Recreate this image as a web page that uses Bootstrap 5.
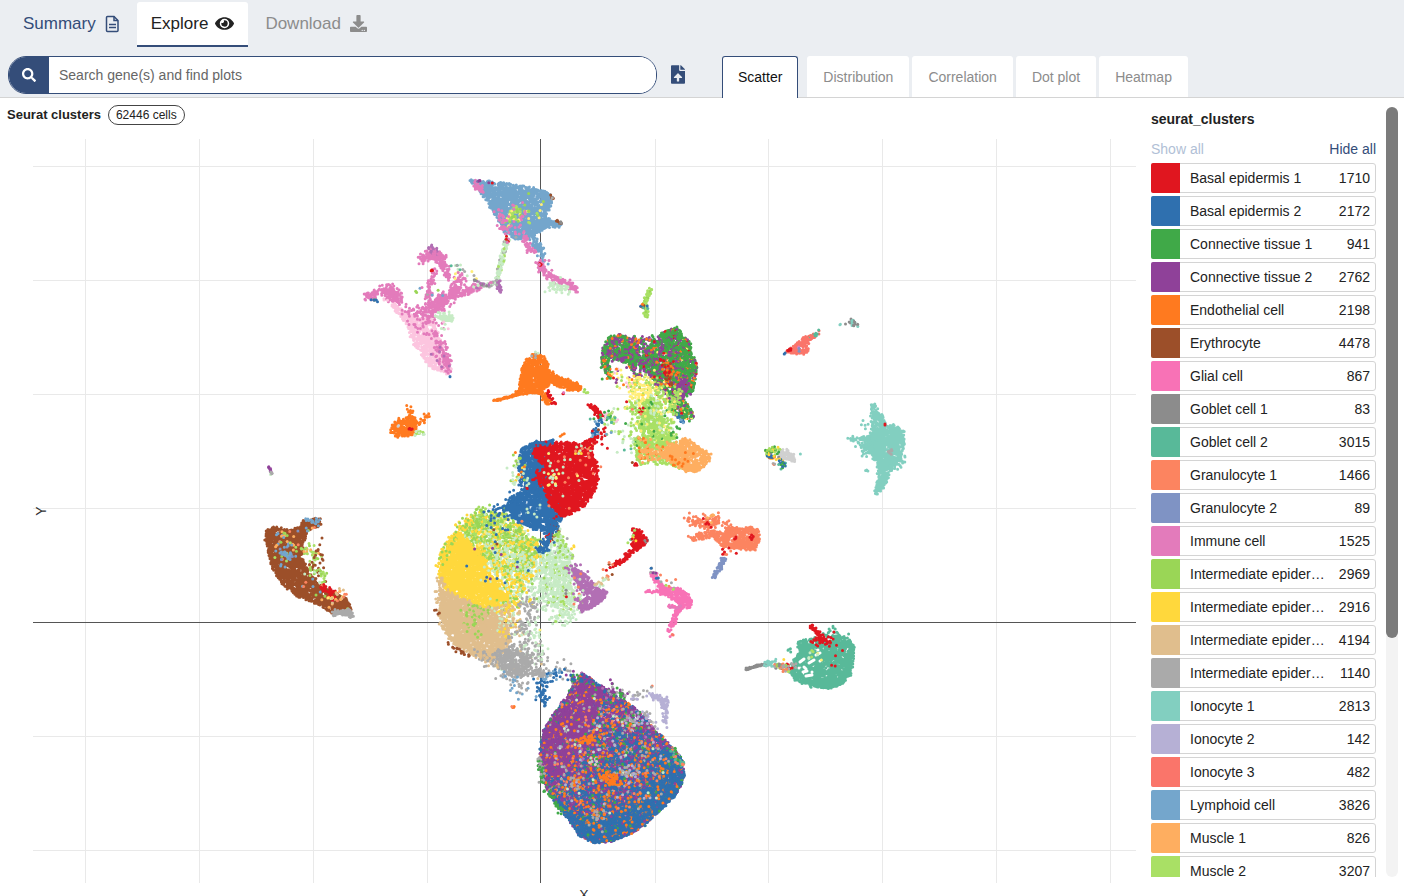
<!DOCTYPE html>
<html lang="en">
<head>
<meta charset="utf-8">
<meta name="viewport" content="width=device-width, initial-scale=1">
<title>Seurat clusters</title>
<link href="https://cdn.jsdelivr.net/npm/bootstrap@5.3.0/dist/css/bootstrap.min.css" rel="stylesheet">
<style>
:root{--navy:#344d79;--edge:#d4d4d4}
body{font-family:"Liberation Sans",Arial,sans-serif;font-size:14px;line-height:20px;color:#222}
.top-area{background:#ebeef2;border-bottom:1px solid var(--edge)}
.page-tabs{padding:2px 0 0 9px;gap:3px;height:56px}
.page-tabs .nav-link{height:45px;font-size:17px;line-height:24px;padding:9px 14px;border-radius:3px 3px 0 0;color:var(--navy);gap:9px;border-bottom:2px solid transparent}
.page-tabs .nav-link.active{background:#fff;color:#222;border-bottom-color:var(--navy);gap:7px}
.page-tabs .nav-link.disabled{color:#8c8c8c}
.search-row{height:41px;padding-left:8px}
.search-box{width:calc(50% - 49px);height:38px;border:1px solid var(--navy);border-radius:18px;overflow:hidden;background:#fff}
.search-box .btn{width:40px;background:var(--navy);border-radius:0;padding:0;border:0}
.search-box .form-control{border:0;font-size:14px;padding:0 10px;border-radius:0}
.search-box .form-control::placeholder{color:#666;opacity:1}
.upload-btn{width:36px;height:36px;margin:0 26px 0 3px}
.plot-tabs{gap:3px}
.plot-tabs .nav-link{height:41px;padding:11px 16px;background:#fff;color:#8c8c8c;border-radius:3px 3px 0 0}
.plot-tabs .nav-link.active{height:42px;padding:10px 15px;color:#111;border:1px solid var(--navy);border-bottom:0;margin-right:6px}
.plot-title{font-size:13px;padding:7px 7px 0;gap:7px}
.cells-pill{font-size:12px;line-height:18px;border:1px solid #444;padding:0 7px;border-radius:10px}
.plot-svg{display:block;width:100%}
.grid-line{stroke:#e9e9e9;stroke-width:1}
.axis-line{stroke:#555;stroke-width:1}
.side-area{width:264px;padding:9px 6px 19px 11px;gap:10px}
.side-title{padding-top:2px}
.legend-links{margin-top:10px}
.legend-links a{color:var(--navy)}
.legend-links a.off{color:#b1bfd6}
.legend-rows{gap:3px;margin-top:4px}
.legend-btn{height:30px;border:1px solid var(--edge);border-radius:3px;background:#fff;padding:0 5px 0 0;color:#222;gap:10px;text-align:left;flex:none}
.swatch-box{width:29px;height:30px;margin:-1px 0 -1px -1px;border-radius:2px 0 0 2px;flex:none}
.scroll-track{width:12px;background:#f3f3f3;border-radius:6px}
.scroll-thumb{height:69%;background:#7b7b7b;border-radius:6px}
</style>
<script src="https://cdn.jsdelivr.net/npm/bootstrap@5.3.0/dist/js/bootstrap.bundle.min.js"></script>
</head>
<body class="vh-100 overflow-hidden d-flex flex-column">
<header class="top-area">
  <nav class="nav page-tabs" aria-label="Sections">
    <a class="nav-link d-flex align-items-center" href="#summary">Summary
      <svg width="15" height="18" viewBox="0 0 15 18" fill="none" stroke="currentColor" stroke-width="1.5"><path d="M2.500 1.500H9L13 5.500V15.500Q13 16.500 12 16.500H2.500Q1.500 16.500 1.500 15.500V2.500Q1.500 1.500 2.500 1.500Z"/><path d="M9 1.500V5.500H13M4 9.500h7M4 12.500h7"/></svg></a>
    <a class="nav-link active d-flex align-items-center" aria-current="page" href="#explore">Explore
      <svg width="19" height="17" viewBox="0 0 576 512" fill="currentColor"><path d="M572.500 241.400C518.300 135.600 410.900 64 288 64S57.700 135.600 3.500 241.400a32.400 32.400 0 0 0 0 29.200C57.700 376.400 165.100 448 288 448s230.300-71.600 284.500-177.400a32.400 32.400 0 0 0 0-29.200zM288 400a144 144 0 1 1 144-144 143.900 143.900 0 0 1-144 144zm0-240a95.300 95.300 0 0 0-25.300 3.800 47.900 47.900 0 0 1-66.900 66.900A95.800 95.800 0 1 0 288 160z"/></svg></a>
    <a class="nav-link disabled d-flex align-items-center" href="#download">Download
      <svg width="17" height="17" viewBox="0 0 512 512" fill="currentColor"><path d="M216 0h80c13.300 0 24 10.700 24 24v168h87.700c17.800 0 26.700 21.500 14.100 34.100L269.700 378.300c-7.500 7.500-19.800 7.500-27.300 0L90.100 226.100c-12.600-12.600-3.700-34.100 14.100-34.100H192V24c0-13.300 10.700-24 24-24zm296 376v112c0 13.300-10.700 24-24 24H24c-13.300 0-24-10.700-24-24V376c0-13.300 10.700-24 24-24h146.700l49 49c20.100 20.100 52.500 20.100 72.600 0l49-49H488c13.300 0 24 10.700 24 24zm-124 88c0-11-9-20-20-20s-20 9-20 20 9 20 20 20 20-9 20-20zm64 0c0-11-9-20-20-20s-20 9-20 20 9 20 20 20 20-9 20-20z"/></svg></a>
  </nav>
  <div class="search-row d-flex">
    <form class="search-box d-flex flex-shrink-0" role="search">
      <button class="btn d-flex align-items-center justify-content-center flex-shrink-0" type="button" aria-label="Search"><svg width="14" height="14" viewBox="0 0 512 512" fill="#fff"><path d="M505 442.700L405.300 343c-4.500-4.500-10.600-7-17-7H372c27.600-35.300 44-79.700 44-128C416 93.100 322.900 0 208 0S0 93.100 0 208s93.100 208 208 208c48.300 0 92.700-16.400 128-44v16.300c0 6.400 2.500 12.500 7 17l99.700 99.700c9.400 9.400 24.600 9.400 33.900 0l28.300-28.300c9.400-9.400 9.400-24.600.1-34zM208 336c-70.700 0-128-57.200-128-128 0-70.700 57.200-128 128-128 70.700 0 128 57.200 128 128 0 70.700-57.200 128-128 128z"/></svg></button>
      <input class="form-control shadow-none" type="text" aria-label="Search genes" placeholder="Search gene(s) and find plots">
    </form>
    <button class="btn upload-btn p-0 border-0 flex-shrink-0" type="button" aria-label="Upload gene list"><svg width="14" height="19" viewBox="0 0 384 512" fill="#344d79"><path d="M224 136V0H24C10.700 0 0 10.700 0 24v464c0 13.300 10.700 24 24 24h336c13.300 0 24-10.700 24-24V160H248c-13.200 0-24-10.800-24-24zm65.200 216H224v80c0 8.800-7.200 16-16 16h-32c-8.800 0-16-7.200-16-16v-80H94.800c-14.300 0-21.400-17.300-11.300-27.400l96.400-95.700c6.700-6.600 17.400-6.600 24 0l96.400 95.700c10.200 10.100 3.100 27.400-11.100 27.400zM377 105L279.100 7c-4.500-4.500-10.600-7-17-7H256v128h128v-6.100c0-6.300-2.500-12.400-7-16.900z"/></svg></button>
    <nav class="nav plot-tabs flex-nowrap" aria-label="Plots">
      <a class="nav-link active" aria-current="page" href="#scatter">Scatter</a>
      <a class="nav-link" href="#distribution">Distribution</a>
      <a class="nav-link" href="#correlation">Correlation</a>
      <a class="nav-link text-nowrap" href="#dotplot">Dot plot</a>
      <a class="nav-link" href="#heatmap">Heatmap</a>
    </nav>
  </div>
</header>
<main class="d-flex flex-grow-1 overflow-hidden">
  <section class="flex-grow-1 overflow-hidden">
    <div class="plot-title d-flex align-items-center"><strong>Seurat clusters</strong><span class="cells-pill">62446 cells</span></div>
    <svg class="plot-svg" id="plot" viewBox="0 125 1140 776" role="img" aria-label="Scatter plot of Seurat clusters">
      <g id="grid"></g>
      <g id="dots" fill="none" stroke-width="3" stroke-linecap="round"></g>
      <text x="584" y="900" font-size="14" text-anchor="middle" fill="#333">X</text>
      <text transform="translate(46 511) rotate(-90)" font-size="14" text-anchor="middle" fill="#333">Y</text>
    </svg>
  </section>
  <aside class="side-area d-flex flex-shrink-0">
    <div class="flex-grow-1 overflow-hidden d-flex flex-column">
      <strong class="side-title">seurat_clusters</strong>
      <div class="legend-links d-flex justify-content-between"><a class="off text-decoration-none" href="#show">Show all</a><a class="text-decoration-none" href="#hide">Hide all</a></div>
      <div class="legend-rows d-flex flex-column" id="legend"></div>
    </div>
    <div class="scroll-track"><div class="scroll-thumb"></div></div>
  </aside>
</main>
<script>
const C={red:'#e0161f',blue:'#2f70af',green:'#40a948',purple:'#8f4199',orange:'#ff7a1f',brown:'#9c4f29',pink:'#f872b6',grey:'#8c8c8c',teal:'#58b999',coral:'#fc8460',slate:'#7f93c4',orchid:'#e37bbb',leaf:'#9ad656',yellow:'#ffd83c',tan:'#e0be8d',ash:'#aaaaaa',aqua:'#82cfc0',lav:'#b6b0d5',salmon:'#fa756a',sky:'#74a6cc',peach:'#feae60',lime:'#a9e065',mint:'#c7ebc5',mauve:'#b26fb4',blush:'#fcc5df',silver:'#d0d0d0',lemon:'#ffee78'};
const rows=[['Basal epidermis 1',1710,'red'],['Basal epidermis 2',2172,'blue'],['Connective tissue 1',941,'green'],['Connective tissue 2',2762,'purple'],['Endothelial cell',2198,'orange'],['Erythrocyte',4478,'brown'],['Glial cell',867,'pink'],['Goblet cell 1',83,'grey'],['Goblet cell 2',3015,'teal'],['Granulocyte 1',1466,'coral'],['Granulocyte 2',89,'slate'],['Immune cell',1525,'orchid'],['Intermediate epider…',2969,'leaf'],['Intermediate epider…',2916,'yellow'],['Intermediate epider…',4194,'tan'],['Intermediate epider…',1140,'ash'],['Ionocyte 1',2813,'aqua'],['Ionocyte 2',142,'lav'],['Ionocyte 3',482,'salmon'],['Lymphoid cell',3826,'sky'],['Muscle 1',826,'peach'],['Muscle 2',3207,'lime']];
document.getElementById('legend').innerHTML=rows.map(r=>`<button type="button" class="legend-btn d-flex align-items-center"><span class="swatch-box" style="background:${C[r[2]]}"></span><span class="flex-grow-1 text-nowrap">${r[0]}</span><span>${r[1]}</span></button>`).join('');

// grid and axes
let g='';
for(const x of [85,199,313,427,655,768,882,996,1110])g+=`<path class="grid-line" d="M${x+.5} 139V883"/>`;
for(const y of [166,280,394,508,736,850])g+=`<path class="grid-line" d="M33 ${y+.5}H1136"/>`;
g+='<path class="axis-line" d="M540.5 139V883M33 622.5H1136"/>';
document.getElementById('grid').innerHTML=g;

// seeded generator keeps the cells in the same place on every load
let seed=7;
const rnd=()=>{seed=(seed*1664525+1013904223)%4294967296;return seed/4294967296};
const gauss=()=>rnd()+rnd()+rnd()+rnd()-2;
const pts=s=>s.split(' ').map(p=>p.split(',').map(Number));
const inside=(x,y,p)=>{let c=false;for(let i=0,j=p.length-1;i<p.length;j=i++){if((p[i][1]>y)!=(p[j][1]>y)&&x<(p[j][0]-p[i][0])*(y-p[i][1])/(p[j][1]-p[i][1])+p[i][0])c=!c}return c};
let out='';
function paint(mix,list){
  const m=mix.split(' ').map(k=>k.split(':')),tot=m.reduce((a,k)=>a+ +(k[1]||1),0),size=m.length>1?Math.ceil(list.length/12):list.length;
  for(let i=0;i<list.length;i+=size){
    const b={};
    list.slice(i,i+size).forEach(p=>{let r=rnd()*tot,c;for(const k of m){c=k[0];r-=+(k[1]||1);if(r<0)break}b[c]=(b[c]||'')+`M${p[0].toFixed(1)} ${p[1].toFixed(1)}h0`});
    for(const c in b)out+=`<path stroke="${C[c]}" d="${b[c]}"/>`;
  }
}
// area: cells spread through a polygon; density is cells per unit of area
function area(mix,density,s,rough=1){
  const p=pts(s),xs=p.map(a=>a[0]),ys=p.map(a=>a[1]),x0=Math.min(...xs),y0=Math.min(...ys),w=Math.max(...xs)-x0,h=Math.max(...ys)-y0,l=[];
  for(let i=0;i<w*h*density;i++){const x=x0+rnd()*w,y=y0+rnd()*h;if(inside(x,y,p))l.push([x+gauss()*rough,y+gauss()*rough])}
  paint(mix,l);
}
// strand: cells scattered along a line
function strand(mix,n,spread,s){
  const p=pts(s),len=[];let t=0;
  for(let i=1;i<p.length;i++){t+=Math.hypot(p[i][0]-p[i-1][0],p[i][1]-p[i-1][1]);len.push(t)}
  const l=[];
  for(let k=0;k<n;k++){const d=rnd()*t;let i=0;while(len[i]<d)i++;const a=i?len[i-1]:0,f=(d-a)/(len[i]-a||1);l.push([p[i][0]+(p[i+1][0]-p[i][0])*f+gauss()*spread,p[i][1]+(p[i+1][1]-p[i][1])*f+gauss()*spread])}
  paint(mix,l);
}
// lymphoid cells
area('sky',.6,'470,180 482,181 510,184 530,187 547,191 552,198 552,206 547,212 546,218 556,221 563,224 560,227 546,227 539,233 530,239 515,239 505,233 501,224 493,212 488,203 479,191');
strand('sky',55,4,'533,238 541,250 535,245'); strand('sky',12,2,'543,252 541,262');
strand('lime:6 leaf lemon',38,4,'507,223 515,214 519,204'); strand('lime lemon leaf',22,5,'502,226 514,217 530,207');
strand('orchid',30,3,'474,184 482,191'); strand('orchid',35,5,'499,212 507,232'); area('orchid',.03,'498,210 525,200 530,235 502,235',2);
strand('purple sky red',10,1,'476,181 494,183'); strand('brown ash',8,1,'549,194 554,200'); strand('brown grey',9,1,'556,220 563,224');
area('lemon leaf orchid lime',.015,'520,193 545,195 542,225 500,225',2);
strand('orchid',45,3,'524,236 528,246 535,254'); strand('orchid',140,3,'538,262 543,271 555,279 568,284 576,290');
strand('red orchid',8,1,'539,263 542,265'); strand('mint',45,5,'549,286 568,289'); strand('orchid sky',5,8,'545,258 545,280');
strand('mint:9 lime ash',130,2,'507,239 503,254 500,267 497,284'); strand('ash orchid red',7,4,'507,238 512,242');
area('mauve',.6,'495,281 500,280 502,293 498,291');
// immune cells
area('orchid',.35,'365,296 372,293 377,298 371,301'); strand('orchid',35,3,'366,297 382,291');
strand('lime ash blue',7,1,'371,299 379,302'); area('orchid',.4,'380,288 388,284 397,287 400,296 405,304 385,300',2);
area('blush',.5,'380,297 394,304 407,314 421,318 433,318 438,334 444,352 452,370 447,374 431,368 421,354 412,342 408,326 397,312');
area('orchid',.06,'393,292 410,306 431,310 435,340 420,335 402,316',2); area('orchid',.14,'395,300 408,307 425,306 430,324 408,314',2);
strand('orchid',80,6,'428,318 437,308 448,298'); strand('orchid',50,7,'437,325 441,350 447,368'); strand('orchid',40,4,'440,345 449,370');
strand('orchid',75,3,'428,310 429,290 435,268'); strand('orchid',120,4,'421,260 429,255 441,257 444,256'); strand('orchid mauve',30,4,'430,247 439,256');
strand('orchid',70,4,'438,258 446,268 449,278'); strand('orchid',190,4,'433,306 445,297 461,292 480,287'); strand('orchid',75,5,'442,304 455,287 464,274');
strand('orchid mauve ash mint:2',55,3,'474,288 486,285 496,282'); area('mint orchid lemon teal ash',.035,'452,263 472,262 477,278 450,282',3); strand('grey mauve',8,1,'473,280 487,286');
strand('mint',60,4,'439,317 452,318'); strand('mint blush',6,4,'445,322 446,331'); strand('blue',2,0,'450,376 450,377');
strand('sky ash orchid leaf',10,6,'410,290 440,292'); strand('red',3,1,'432,270 432,271'); strand('orchid mauve',16,8,'435,345 444,368');
// muscle and connective tissue
strand('lime:9 leaf',75,2,'650,289 645,302 646,317'); strand('teal orange brown blue',12,3,'640,305 647,308');
area('purple:6 green:3 orange',.2,'632,337 660,337 665,375 640,380 615,352',3);
area('green:13 purple:7 orange:2',.55,'604,345 608,338 618,334 630,337 637,345 640,360 635,371 626,364 617,359 608,363 612,377 605,375 601,360');
area('green:12 purple:8 orange:2 red lemon:.4',.55,'656,337 666,331 676,327 683,335 690,342 691,353 697,362 695,385 692,394 683,396 674,398 660,388 651,377 640,364 645,350');
area('green',.14,'658,336 676,328 691,350 696,365 690,392 680,360');
area('green:9 orange:2 purple:2 lemon',.45,'682,396 690,407 695,418 680,421 669,408 672,401',1);
strand('blue sky',15,2,'676,415 684,421'); area('purple',.3,'683,378 690,382 683,400 676,400 677,385');
strand('green:4 orange lemon',30,5,'604,363 610,378'); area('lemon:4 lime red purple blush orange',.06,'612,366 632,372 640,390 625,390 612,380',3);
area('lemon:8 lime:2 yellow',.24,'632,378 646,376 655,383 654,395 644,402 634,406 628,393',3);
area('lime:8 green purple lemon:2 red orange',.12,'655,378 678,385 682,415 656,410',3); area('red orange brown',.12,'662,358 678,368 676,385 661,380',3);
area('lime:12 lemon mint',.5,'647,398 657,401 662,413 665,426 675,437 667,446 648,449 644,435 638,425 641,410',3);
area('lime:9 mint green lemon',.1,'625,400 680,390 672,430 680,455 640,465 633,446',4);
area('lime:5 mint:5 teal green lemon',.035,'595,412 632,413 640,460 615,452 604,437',7);
area('lime',.35,'637,447 651,440 662,443 652,452 637,463',3); strand('lime',50,4,'650,460 690,466');
area('orange:2 lime peach',.12,'635,437 650,438 650,460 638,460',2); strand('peach:6 orange lime',110,7,'643,455 660,452 675,450');
area('peach',.6,'668,445 686,438 696,445 711,454 710,463 696,472 683,470 673,463 660,455'); strand('orange',14,8,'667,457 690,464');
strand('red brown blue',7,2,'634,464 637,466'); strand('green',10,5,'668,438 690,415');
// goblet, ionocyte and granulocyte groups
area('red',.5,'587,404 595,405 603,415 598,418'); strand('red',18,1,'590,405 602,416'); strand('green teal lime:2 blush',35,4,'602,415 616,420'); strand('blue:4 sky',26,3,'599,419 598,430 593,438'); strand('lime red coral',12,4,'626,403 645,412');
area('red:5 brown sky',.05,'590,425 612,425 610,445 588,445',5); area('red',.25,'582,444 592,435 594,448 586,455',3);
area('salmon',.6,'785,351 793,347 802,338 812,335 815,337 808,341 808,352 800,355 794,354'); strand('red',10,1,'787,351 792,349'); strand('blue',3,1,'784,354 786,353'); strand('salmon teal',20,2,'809,337 820,332'); strand('orchid slate',4,2,'797,349 800,350');
strand('aqua grey',22,3,'848,322 852,321 855,325'); strand('aqua',2,1,'840,324 841,324');
area('aqua',.7,'870,403 876,405 878,411 884,417 886,426 894,424 903,431 905,440 902,455 893,468 888,477 883,489 876,496 874,493 878,480 878,463 868,453 863,447 864,439 870,434 873,424 871,413');
strand('aqua',35,2,'849,439 858,439 872,437'); strand('aqua',35,7,'858,445 870,445 863,455'); strand('aqua',32,5,'895,468 901,458'); strand('aqua',10,6,'865,430 873,420'); strand('red',3,0,'885,424 885,425'); strand('ash',8,2,'890,451 891,454'); strand('aqua',3,1,'866,471 867,471');
area('silver',.6,'779,450 788,449 796,458 795,462 786,460 778,455'); strand('lime:3 leaf green yellow',40,3,'765,453 774,449 778,453'); strand('yellow orange grey blue',26,3,'767,457 776,456 783,462'); strand('blue green teal',13,3,'782,462 784,468'); strand('coral ash',3,1,'774,464 775,464');strand('aqua',1,0,'800,454 801,454');
area('coral',.6,'710,534 724,530 730,527 745,529 758,529 760,538 755,550 747,550 738,548 730,552 720,544');
strand('coral',65,3,'690,539 701,536 716,534'); strand('coral',75,5,'687,518 700,523 713,530'); strand('coral',50,5,'706,519 724,524 733,532'); strand('coral peach',12,4,'705,517 719,517'); strand('coral',22,4,'743,525 756,532'); strand('red',5,3,'704,521 709,528'); strand('red',6,2,'750,536 752,539'); strand('red',3,1,'732,540 739,536'); strand('red orchid coral',8,5,'722,552 743,552');
strand('slate',70,2,'724,559 719,569 714,577');
// glial cells
area('pink',.6,'659,588 676,587 688,593 693,603 689,609 680,604 671,598 659,593'); strand('pink',65,3,'652,574 659,583 665,591'); strand('pink',38,1,'645,591 665,592'); strand('pink',75,3,'684,605 677,612 672,624 669,630'); strand('pink orchid',20,2,'670,607 681,608'); strand('purple ash coral blue',11,3,'650,570 664,582'); strand('ash lime coral',7,8,'668,587 688,590'); strand('pink salmon',4,3,'670,631 671,636');
// red tail
area('red',.5,'635,535 641,532 648,540 644,545 637,548 631,546'); strand('red',50,3,'635,530 641,540'); strand('red',75,2,'642,545 630,552 623,562 612,565'); strand('red coral brown',11,4,'612,564 606,580'); strand('lime teal yellow red',8,4,'628,540 637,533'); strand('grey red',7,2,'644,544 646,540');
// endothelial cells
area('orange',.7,'532,354 541,353 547,359 549,369 557,376 574,382 582,387 580,391 563,388 551,382 543,391 552,402 547,405 538,393 520,395 505,398 519,390 521,370 526,359');
strand('orange',55,1,'492,401 510,397 520,393'); strand('orange',25,2,'568,386 581,389'); strand('red',18,2,'548,391 550,397 555,405'); strand('red orchid',3,1,'563,393 564,394'); strand('lime leaf',4,2,'583,391 587,392'); strand('ash mint',5,3,'532,354 536,355');
area('orange',.7,'391,428 398,419 410,417 417,421 417,430 410,436 397,437 392,434'); strand('orange',25,3,'409,409 413,418'); strand('orange',18,4,'417,424 428,417'); strand('red',5,1,'405,426 415,431'); strand('mint lime',12,2,'415,432 424,434'); strand('silver',2,2,'398,426 406,430');
strand('purple mauve',9,1,'269,467 271,471'); strand('mint ash',5,1,'271,471 271,475');
// erythrocytes
area('brown',.7,'265,531 274,527 287,530 299,527 304,521 320,518 321,525 308,531 304,540 303,560 309,572 318,584 333,592 347,599 352,609 346,612 330,612 318,604 298,597 283,585 274,572 268,552');
area('sky:4 slate lime leaf peach coral',.055,'272,532 296,530 308,522 320,520 318,527 300,535 298,556 285,570 274,555',3);
area('lime leaf sky coral',.02,'280,540 300,560 305,590 330,604 345,604 325,590 300,570',5);
strand('sky slate',22,4,'284,550 289,558'); strand('sky',16,3,'305,521 320,520');
strand('lime:3 peach leaf',40,6,'300,548 314,553 316,562'); strand('brown',22,5,'319,538 321,558 312,570 320,578'); strand('lime leaf brown mint',32,5,'310,570 322,572 324,580');
strand('red',38,4,'322,586 330,593 338,596'); strand('peach coral lemon tan',26,7,'328,601 346,594'); strand('ash',75,3,'334,614 344,612 353,615');
// goblet cells
area('teal',.7,'797,643 803,640 815,638 828,643 835,637 847,637 854,647 853,665 849,676 840,685 825,689 808,685 795,680 789,671 795,658 800,652');
strand('teal',35,5,'825,636 835,632 843,640'); strand('teal',4,2,'789,651 790,652');
out+='<path stroke="#fff" stroke-width="3" d="M799 668h0M803 672l4 -1M806 676l6 -1M809 663l5 -3M800 662l4 -3M816 655l4 -2M812 672h0M804 667l2 2M818 650h0M820 661h0"/>';
strand('red',50,2,'810,625 818,633 822,639'); strand('red',38,6,'815,641 832,639'); area('red',.012,'815,640 847,640 842,670 825,665',3); strand('mint lemon lime',9,6,'808,656 820,654'); strand('yellow red coral lime',22,5,'784,666 790,672'); strand('red ash',10,3,'785,669 796,664');
strand('grey',75,1,'746,669 757,666 770,664'); strand('aqua',24,3,'767,664 776,662'); strand('grey ash coral leaf',28,3,'776,665 786,668');
// epidermis
area('mint:9 ash lime',.1,'520,545 565,535 575,560 582,610 560,622 540,610 520,595',6);
area('mint:9 lime',.26,'540,556 555,543 566,547 572,565 570,585 575,608 551,606 541,590',4);
area('leaf:7 yellow:6 lime:3 mint:3 lemon',.36,'463,529 477,514 500,513 520,526 540,543 537,561 520,575 500,570 465,548',3);
area('leaf:6 lime:2 mint',.12,'472,508 500,508 510,518 472,530',5);
area('mint:8 yellow:2 leaf',.12,'490,545 541,555 538,575 505,575 492,570',5);
area('mint:4 yellow:4 leaf',.07,'500,572 540,572 535,605 505,600',5);
area('yellow',.65,'460,532 472,545 486,560 490,572 500,588 512,599 510,606 495,609 487,612 465,602 445,592 439,574 443,556 450,541');
strand('yellow leaf:.5',130,4,'440,570 448,544 460,529 474,515'); area('yellow:5 mint leaf',.15,'480,560 525,577 520,610 490,608',5);
area('tan',.65,'439,590 448,592 465,600 480,608 495,611 506,625 510,643 499,656 486,660 471,654 455,645 444,630 440,610',2);
area('tan:4 yellow mint',.2,'492,606 520,602 520,630 505,640',4); strand('tan',60,4,'440,577 439,600 445,626');
area('leaf tan:2',.16,'466,608 490,605 485,635 463,632',4);
area('ash:9 mint tan',.12,'513,625 535,635 545,665 538,680 508,670 480,662 505,648',6); area('ash',.45,'496,654 507,649 521,650 531,661 528,674 512,678 500,670',4);
strand('ash',60,7,'523,604 531,600 530,622 519,628'); strand('ash',45,4,'533,673 549,675'); strand('ash tan',55,4,'478,652 500,668'); strand('ash sky',35,8,'500,674 530,693'); strand('ash',22,8,'540,655 580,680');
strand('brown',22,2,'447,642 458,650 471,657'); strand('mint:6 lemon',30,10,'530,622 540,650'); strand('brown',4,7,'436,606 441,618'); area('blue purple brown',.005,'460,540 500,530 540,570 490,600',4);
strand('mint',25,7,'555,620 578,618'); strand('blue',45,5,'541,680 544,702'); strand('blue sky',24,6,'545,683 560,671');
area('blue',.6,'521,449 537,442 549,441 549,470 542,488 562,507 562,522 550,532 540,531 516,521 505,508 510,497 524,491 527,480 517,469');
area('red',.65,'537,444 546,442 575,443 592,450 597,465 598,480 594,492 586,505 572,513 563,518 550,504 544,489 541,478 544,465 533,455');
area('blue',.2,'519,475 540,477 540,495 521,492',3); strand('red',35,6,'532,484 541,474 546,490'); strand('red brown blue',35,5,'559,520 552,534 544,543'); strand('blue',70,5,'556,523 547,537 543,550'); strand('blue',14,2,'538,552 544,548');
area('leaf:3 yellow orange mint blue:.5',.09,'513,453 523,455 525,480 512,483',5); strand('mint',12,9,'515,475 522,488');
area('mint:2 coral lemon',.008,'545,455 580,450 592,480 568,507 550,500',3); strand('lemon mint',20,7,'558,470 550,484'); strand('blue',24,3,'536,443 555,442');
strand('blue',28,7,'494,512 508,502 517,495'); strand('blue',16,9,'487,517 503,527'); strand('mint leaf lime',35,5,'557,532 565,550'); strand('yellow coral mint',16,4,'574,450 591,447'); strand('coral',7,9,'588,459 602,472'); strand('sky coral mint',9,9,'520,515 545,510'); strand('red',30,5,'586,447 596,438'); strand('orange red',3,3,'560,435 568,434');
area('mauve',.6,'573,570 580,572 588,576 598,588 608,592 603,600 592,608 582,612 578,608 586,596 578,588'); strand('mauve',35,5,'569,566 581,574'); strand('mauve:4 coral mint',28,6,'580,575 579,608'); strand('mint tan',15,3,'596,586 607,580'); strand('red grey',3,3,'565,593 566,596'); strand('yellow',3,2,'574,548 575,552');
// lower connective tissue
area('purple:9 blue:5 orange:1.6 green:1.1 ash:.5 mauve:.5 coral:.5',.7,'582,673 592,680 612,692 625,702 640,712 655,728 667,742 682,758 684,778 676,795 660,808 648,822 632,833 613,841 594,843 579,835 571,822 555,803 545,784 539,767 541,745 543,730 556,710 566,698 574,682');
area('blue:9 purple:4 orange:2 ash:.8 green',.25,'620,730 660,755 665,775 640,805 600,820 560,810 550,790 590,780');
area('blue:14 orange green:.4 purple:.4',.55,'660,750 682,758 684,778 676,795 648,822 632,833 613,841 594,843 579,835 571,822 555,803 585,817 610,815 641,797 660,773');
area('purple:14 orange ash:.4 green:.4',.45,'582,681 604,693 590,730 574,755 556,778 546,772 543,735 567,702',2);
area('orange:5 coral:2 mint ash:2 lav:2',.022,'580,690 610,700 670,755 660,800 600,825 560,795 548,750',3);
strand('orange',50,6,'601,774 614,782'); strand('orange',35,4,'580,742 598,737'); strand('ash lav',24,8,'626,767 632,778'); strand('orange ash',22,5,'573,790 577,780'); strand('orange ash',26,7,'600,810 592,830'); strand('silver green',14,5,'592,757 596,765');
strand('green blue purple',35,5,'569,676 586,680'); strand('green purple ash',35,6,'612,688 625,696'); strand('green ash',35,3,'540,758 543,785'); strand('green teal coral',30,3,'670,748 683,765'); strand('green',24,3,'545,790 565,812'); strand('silver lav ash green',32,8,'622,718 644,728'); strand('ash lav',20,5,'640,713 661,730');
strand('lav',35,3,'650,694 661,700 667,701'); area('lav',.4,'655,695 668,700 667,719 663,717 662,705'); strand('lav ash',18,5,'634,699 647,692'); strand('coral ash',2,1,'652,687 653,687'); strand('lav',8,2,'664,718 667,728'); strand('coral orange',5,1,'512,707 514,707');
document.getElementById('dots').innerHTML=out;
</script>
</body>
</html>
